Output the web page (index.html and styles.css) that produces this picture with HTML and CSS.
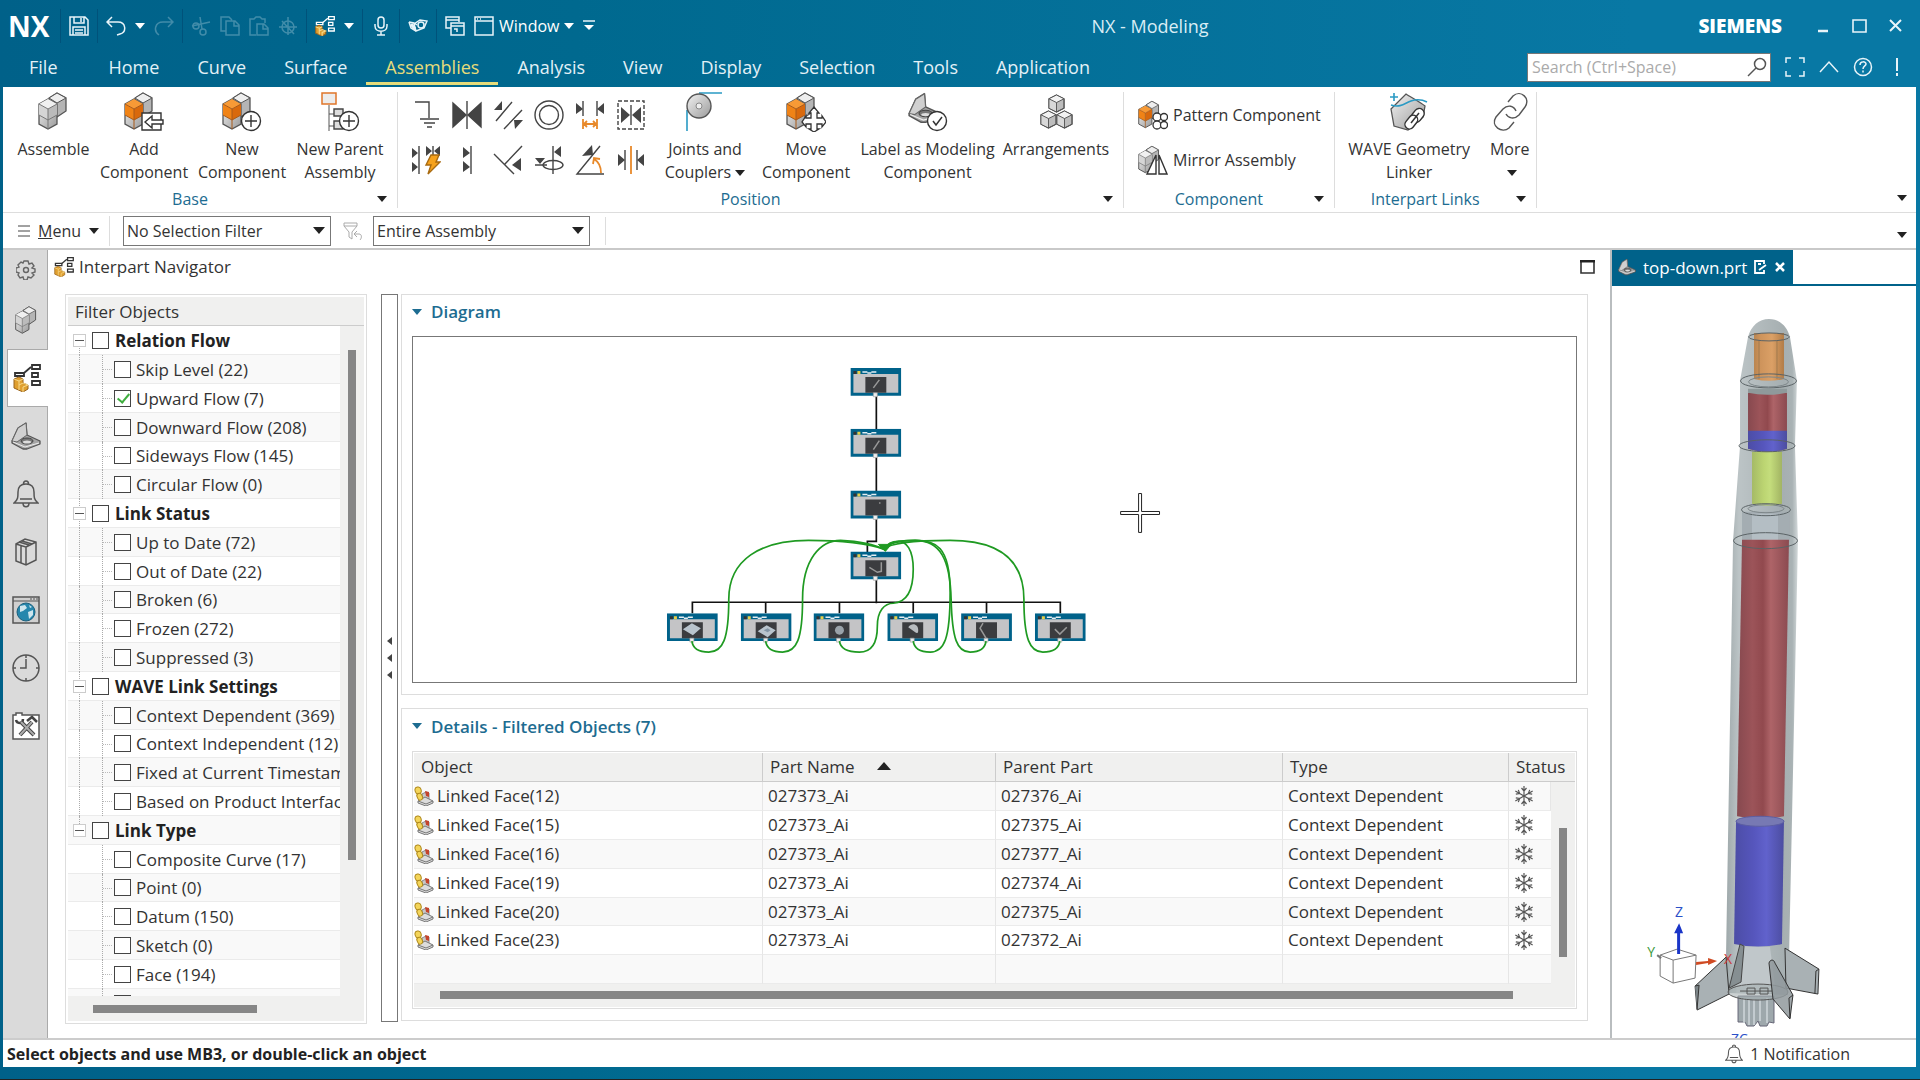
FILE: index.html
```html
<!DOCTYPE html>
<html lang="en">
<head>
    <meta charset="UTF-8">
    <meta name="viewport" content="width=device-width, initial-scale=1.0">
    <title>NX - Modeling</title>
    <link rel="stylesheet" href="styles.css">
</head>

<body>
    <!-- Shared icon shapes -->
    <svg class="sprite" aria-hidden="true">
        <linearGradient id="metal" x1="0" x2="1" y1="0" y2="1"><stop offset="0" stop-color="#f2f2f2"/><stop offset="1" stop-color="#9a9a9a"/></linearGradient>
        <symbol id="cubes" viewBox="0 0 30 38">
            <path d="M19 1l9 5v13l-9 6-8-6V6z" fill="#b5b5b5" stroke="#555" stroke-width="1.3"/>
            <path d="M19 1l9 5-9 5-8-5z" fill="#eee" stroke="#555"/>
            <path d="M1 12l9-5 9 5v20l-9 5-9-5z" fill="url(#metal)" stroke="#555" stroke-width="1.3"/>
            <path d="M10 17l9-5v11l-9 5z" style="fill:var(--right,#bbb)"/>
            <path d="M1 12l9 5v11l-9-5z" style="fill:var(--left,#d5d5d5)"/>
            <path d="M10 7l9 5-9 5-9-5z" style="fill:var(--top,#f0f0f0)"/>
            <path d="M1 23l9 5 9-5M10 17v20M1 12l9 5 9-5" fill="none" style="stroke:var(--edge,#777)"/>
        </symbol>
        <symbol id="cube" viewBox="0 0 18 20">
            <path d="M9 1l8 4v10l-8 4-8-4V5z" fill="#bdbdbd" stroke="#555" stroke-width="1.2"/>
            <path d="M9 1l8 4-8 4-8-4z" fill="#f2f2f2"/>
            <path d="M1 5l8 4v10l-8-4z" fill="#d8d8d8"/>
            <path d="M9 1l8 4v10l-8 4-8-4V5zM1 5l8 4 8-4M9 9v10" fill="none" stroke="#555"/>
        </symbol>
        <symbol id="bracket" viewBox="0 0 30 28">
            <path d="M1 19L7 6l8-5 1 12 13 6v3l-13 5h-4L1 21z" fill="#a5a5a5" stroke="#555" stroke-width="1.3" stroke-linejoin="round"/>
            <path d="M7 6l8-5 1 12-10 7-5-1z" fill="#d0d0d0" stroke="#666"/>
            <path d="M2 20l12 5 14-4" fill="none" stroke="#eee"/>
            <ellipse cx="16" cy="19" rx="6" ry="3" fill="#777" stroke="#444"/>
            <ellipse cx="16" cy="20" rx="4" ry="1.5" fill="#ddd"/>
        </symbol>
        <symbol id="navigator" viewBox="0 0 28 28">
            <path d="M2 9h9v3H2zM19 1h8v4h-8zM19 9h6v4h-6zM19 17h8v4h-8z" fill="none" stroke="currentColor" stroke-width="1.8"/>
            <path d="M11 9l7-6" stroke="currentColor" stroke-width="1.8"/>
            <path d="M1 15l5-2 4 2v4l5 2v4l-5 3-9-4z" fill="#e0a030" stroke="#9a641c"/>
            <path d="M1 15l5 2 4-2M6 17v9M6 21l4-2 5 2-5 2v5" fill="none" stroke="#f7d98a"/>
        </symbol>
        <symbol id="mate" viewBox="0 0 30 30">
            <path d="M1 3v24l13-12zM29 3v24L16 15z" fill="#444"/>
            <path d="M15 1v28" stroke="#444" stroke-width="1.4"/>
        </symbol>
        <symbol id="linked" viewBox="0 0 20 20">
            <path d="M8 8l4-2 3 1v7H8z" fill="#c9c9c9" stroke="#888"/>
            <path d="M11 5l4 1v5l-3-1z" fill="#c4442c"/>
            <path d="M4 15l7-4 8 4v2l-7 3-8-3z" fill="#dcdcdc" stroke="#777"/>
            <path d="M4 15l8 3 7-3" fill="none" stroke="#777"/>
            <rect x="1" y="1" width="6" height="7" rx="3" fill="#f4d55a" stroke="#b08a1c" transform="rotate(-15 4 4)"/>
            <rect x="3" y="7" width="5" height="7" rx="2.5" fill="#f4d55a" stroke="#b08a1c" transform="rotate(-25 6 10)"/>
        </symbol>
        <symbol id="snow" viewBox="0 0 20 20">
            <g fill="none" stroke="#555" stroke-width="1.2">
                <path id="arm" d="M10 10V0M7.500 2l2.500 3 2.500-3"/>
                <use href="#arm" transform="rotate(60 10 10)"/>
                <use href="#arm" transform="rotate(120 10 10)"/>
                <use href="#arm" transform="rotate(180 10 10)"/>
                <use href="#arm" transform="rotate(240 10 10)"/>
                <use href="#arm" transform="rotate(300 10 10)"/>
            </g>
        </symbol>
        <symbol id="bell" viewBox="0 0 26 28">
            <path d="M1 23c4-3 4-6 4-11 0-5 3-8 8-8s8 3 8 8c0 5 0 8 4 11zM10 23c0 5 6 5 6 0M10.500 4c0-4 5-4 5 0M7 19h12" fill="none" stroke="#555" stroke-width="1.5"/>
        </symbol>
        <symbol id="node" viewBox="0 0 51 30">
            <path fill="#00628a" d="M0 0h51v28H0z"/>
            <path fill="#c4c4c6" d="M3 6h45v19H3z"/>
            <path fill="#3b3c3f" d="M15 9h21v16H15z"/>
            <path fill="#333" d="M3 3h3v3H3z"/>
            <path fill="#e8d04a" d="M7 3h3v3H7z"/>
            <path d="M12 4h5m0 1h4m0-1h5" stroke="#e4eef3" stroke-width="1.5"/>
            <path fill="#eee" stroke="#999" stroke-width=".6" d="M23 25h4v4h-4z"/>
        </symbol>
    </svg>

    <div class="app">
        <!-- Title bar with quick access tools -->
        <header class="titlebar">
            <div class="quick">
                <strong class="brand">NX</strong>
                <div class="tools">
                    <button class="tool" aria-label="Save"><svg width="20" height="20" viewBox="0 0 20 20"><path d="M1 1h15l3 3v15H1zM5 1v6h10V1M12 2v4M4 19v-8h12v8M6 14h8M6 17h8"/></svg></button>
                </div>
                <div class="tools">
                    <button class="tool" aria-label="Undo"><svg width="20" height="20" viewBox="0 0 20 20"><path d="M6 1L1 6l5 5M1 6h11c8 0 9 10 2 12l-3 1"/></svg><span class="caret"></span></button>
                    <button class="tool" disabled aria-label="Redo"><svg width="20" height="20" viewBox="0 0 20 20"><path d="M14 1l5 5-5 5M19 6H9C1 6-1 15 5 19"/></svg></button>
                </div>
                <div class="tools">
                    <button class="tool" disabled aria-label="Cut"><svg width="20" height="20" viewBox="0 0 20 20"><path d="M9 1l2 12M1 10l18-4"/><circle cx="5" cy="10" r="3"/><circle cx="12" cy="16" r="3"/></svg></button>
                    <button class="tool" disabled aria-label="Copy"><svg width="20" height="20" viewBox="0 0 20 20"><path d="M6 15H1V1h8l3 3M6 5h9l4 4v10H6zM14 5v5h5"/></svg></button>
                    <button class="tool" disabled aria-label="Paste"><svg width="20" height="20" viewBox="0 0 20 20"><path d="M7 19H1V3h4l2-2h4l2 2h3v4M8 8h7l4 4v7H8zM14 8v5h5"/></svg></button>
                    <button class="tool" disabled aria-label="Delete"><svg width="20" height="20" viewBox="0 0 20 20"><circle cx="10" cy="11" r="6"/><path d="M10 1v18M1 11h18M4 5l12 13"/></svg></button>
                </div>
                <div class="tools">
                    <button class="tool" aria-label="Interpart Navigator"><svg width="20" height="20" class="plain"><use href="#navigator"/></svg><span class="caret"></span></button>
                </div>
                <div class="tools">
                    <button class="tool" aria-label="Dictate"><svg width="20" height="20" viewBox="0 0 20 20"><rect x="7" y="1" width="6" height="11" rx="3"/><path d="M4 8v2c0 7 12 7 12 0V8M10 15v4M6 19h8"/></svg></button>
                </div>
                <div class="tools">
                    <button class="tool" aria-label="Touch mode"><svg width="20" height="20" viewBox="0 0 20 20"><path d="M1 6l5 1 3 2M1 6l2 6 5 3M8 15l-2-7 6-4 7 1-3 7z"/><circle cx="13" cy="9" r="3"/><path d="M3 8l4 5" stroke-width="3"/></svg></button>
                </div>
                <div class="tools">
                    <button class="tool" aria-label="Switch window"><svg width="20" height="20" viewBox="0 0 20 20"><path d="M6 12H1V1h13v5M1 4h13M6 7h13v12H6zM6 10h13M9 13h3v3"/></svg></button>
                    <button class="tool window"><svg width="20" height="20" viewBox="0 0 20 20"><path d="M1 1h18v18H1zM1 5h18M3 3h1M6 3h1"/></svg>Window<span class="caret"></span></button>
                    <button class="tool" aria-label="Customize"><svg width="12" height="12" viewBox="0 0 12 12"><path d="M0 1h12"/><path d="M1 5h10l-5 5z" fill="#fff" stroke="none"/></svg></button>
                </div>
            </div>
            <h1 class="title">NX - Modeling</h1>
            <div class="system">
                <strong class="vendor">SIEMENS</strong>
                <button class="tool" aria-label="Minimize"><svg width="16" height="16" viewBox="0 0 16 16"><path d="M2 13h10" stroke-width="2.500"/></svg></button>
                <button class="tool" aria-label="Restore"><svg width="16" height="16" viewBox="0 0 16 16"><path d="M1 2h13v12H1z" stroke-width="1.600"/></svg></button>
                <button class="tool" aria-label="Close"><svg width="16" height="16" viewBox="0 0 16 16"><path class="bold" d="M2 2l11 11M13 2L2 13"/></svg></button>
            </div>
        </header>

        <nav class="tabs">
            <a href="#" class="file">File</a>
            <a href="#">Home</a>
            <a href="#">Curve</a>
            <a href="#">Surface</a>
            <a href="#" class="active">Assemblies</a>
            <a href="#">Analysis</a>
            <a href="#">View</a>
            <a href="#">Display</a>
            <a href="#">Selection</a>
            <a href="#">Tools</a>
            <a href="#">Application</a>
            <div class="search">
                <input type="text" placeholder="Search (Ctrl+Space)" aria-label="Search">
                <svg class="lens" width="20" height="20" viewBox="0 0 20 20"><circle cx="13" cy="7" r="5.500"/><path d="M9 11l-8 8"/></svg>
            </div>
            <div class="corner">
                <button class="tool" aria-label="Full screen"><svg width="20" height="20" viewBox="0 0 20 20"><path d="M6 1H1v5M14 1h5v5M6 19H1v-5M14 19h5v-5"/></svg></button>
                <button class="tool" aria-label="Collapse ribbon"><svg width="20" height="20" viewBox="0 0 20 20"><path d="M1 15l9-10 9 10"/></svg></button>
                <button class="tool" aria-label="Help"><svg width="20" height="20" viewBox="0 0 20 20"><circle cx="10" cy="10" r="8.500"/><path d="M7 8c0-4 6-4 6-1 0 2-3 2-3 5M10 13.500v2"/></svg></button>
                <button class="tool" aria-label="Alerts"><svg width="20" height="20" viewBox="0 0 20 20"><path class="bold" d="M10 1v13M10 16v3"/></svg></button>
            </div>
        </nav>

        <!-- Ribbon -->
        <div class="ribbon">
            <section class="group">
                <div class="commands base">
                    <button class="cmd w82"><svg width="40" height="40" viewBox="0 0 40 40"><use href="#cubes" x="4" width="30" height="38"/></svg>Assemble</button>
                    <button class="cmd w98 orange"><svg width="40" height="40" viewBox="0 0 40 40"><use href="#cubes" width="30" height="38"/><path d="M18 21h19v17H18z" fill="#fff" stroke="#333" stroke-width="1.4"/><path d="M21 30l7-6v4h11v4H28v4z" fill="#fff" stroke="#333" stroke-width="1.4"/></svg>Add<br>Component</button>
                    <button class="cmd w98 orange"><svg width="40" height="40" viewBox="0 0 40 40"><use href="#cubes" width="30" height="38"/><circle cx="29" cy="29" r="9.500" fill="#fff" stroke="#333" stroke-width="1.4"/><path d="M29 23v12M23 29h12" stroke="#333" stroke-width="1.4"/></svg>New<br>Component</button>
                    <button class="cmd w98"><svg width="40" height="40" viewBox="0 0 40 40"><path d="M9 13v26M9 22h5M9 34h5" stroke="#555" fill="none"/><path d="M2 1h14v11H2z" fill="#ececec" stroke="#e0762a" stroke-width="1.5"/><path d="M14 17h9v7h-9zM14 29h9v8h-9z" fill="#ddd" stroke="#444" stroke-width="1.4"/><circle cx="29" cy="29" r="9.500" fill="#fff" stroke="#333" stroke-width="1.4"/><path d="M29 23v12M23 29h12" stroke="#333" stroke-width="1.4"/></svg>New Parent<br>Assembly</button>
                </div>
                <footer><span>Base</span><span class="caret"></span></footer>
            </section>

            <section class="group">
                <div class="commands position">
                    <div class="constraints">
                        <button aria-label="Fix"><svg viewBox="0 0 30 30"><path d="M4 2h14v16M9 19h19M13 23h11M16 27h5"/></svg></button>
                        <button aria-label="Touch"><svg><use href="#mate"/></svg></button>
                        <button aria-label="Parallel"><svg viewBox="0 0 30 30"><path d="M3 21L19 2M11 29l18-19"/><path class="solid" d="M1 10l8-9v9zM21 20h9l-8 9z"/></svg></button>
                        <button aria-label="Concentric"><svg viewBox="0 0 30 30"><circle cx="15" cy="15" r="14"/><circle cx="15" cy="15" r="9.500"/></svg></button>
                        <button aria-label="Distance"><svg viewBox="0 0 30 30"><path d="M8 1v15M22 1v15"/><path class="solid" d="M1 3v11l7-5zM29 3v11l-7-5z"/><path d="M8 19v10M22 19v10M9 24h12M12 21l-3 3 3 3M18 21l3 3-3 3" class="hot"/></svg></button>
                        <button aria-label="Bond"><svg viewBox="0 0 30 30"><path d="M2 1h26v28H2z" stroke-dasharray="4 2"/><path class="solid" d="M5 7v16l9-8zM25 7v16l-9-8z"/><path d="M15 5v20"/></svg></button>
                        <button aria-label="Constraints"><svg viewBox="0 0 30 30"><path d="M8 1v28M22 1v10"/><path class="solid" d="M1 3v10l6-5zM1 17v10l6-5zM15 1v10l6-5zM29 1v10l-6-5z"/><path d="M20 10h8l-3 7h4L17 29l3-9h-5z" fill="#f6a21c" stroke="#a86a10"/></svg></button>
                        <button aria-label="Align"><svg viewBox="0 0 30 30"><path d="M19 1v28"/><path class="solid" d="M11 2v11l7-5zM11 16v11l7-5z"/></svg></button>
                        <button aria-label="Perpendicular"><svg viewBox="0 0 30 30"><path d="M29 1L11 20M1 9l20 20"/><path class="solid" d="M19 20l9-7v13z"/></svg></button>
                        <button aria-label="Axis"><svg viewBox="0 0 30 30"><path d="M19 1v28M1 20h12"/><ellipse cx="19" cy="20" rx="10" ry="4.500"/><path class="solid" d="M1 13h10l-5 6zM27 1v11l-7-5z"/></svg></button>
                        <button aria-label="Angle"><svg viewBox="0 0 30 30"><path d="M25 1L2 29h27"/><path class="solid" d="M7 11L17 0l1 10z"/><path class="hot" d="M19 14c5 3 7 8 7 14M18 19l1-6 6 1"/></svg></button>
                        <button aria-label="Center"><svg viewBox="0 0 30 30"><path class="hot" d="M15 1v28"/><path d="M9 5v20M21 5v20"/><path class="solid" d="M2 9v12l7-6zM28 9v12l-7-6z"/></svg></button>
                    </div>
                    <button class="cmd w108"><svg width="40" height="40" viewBox="0 0 40 40"><path d="M14 1h23M2 18v21" stroke="#2a9ac4" stroke-width="1.6"/><circle cx="14" cy="14" r="12" fill="url(#metal)" stroke="#555" stroke-width="1.4"/><circle cx="14" cy="14" r="3" fill="#eee" stroke="#888"/></svg>Joints and<br>Couplers<span class="caret"></span></button>
                    <button class="cmd w94 orange"><svg width="40" height="40" viewBox="0 0 40 40"><use href="#cubes" width="30" height="38"/><path d="M28 15l5 6h-2v5h5v-2l4 6-4 5v-3h-5v5h2l-5 3-5-3h2v-5h-5v3l-4-5 4-6v2h5v-5h-2z" fill="#fff" stroke="#333" stroke-width="1.3"/></svg>Move<br>Component</button>
                    <button class="cmd w148"><svg width="40" height="40" viewBox="0 0 40 40"><use href="#bracket" width="33" height="32"/><circle cx="29" cy="29" r="9.500" fill="#fff" stroke="#333" stroke-width="1.4"/><path d="M25 29l3 4 6-8" fill="none" stroke="#333" stroke-width="1.5"/></svg>Label as Modeling<br>Component</button>
                    <button class="cmd w108"><svg width="40" height="40" viewBox="0 0 40 40"><use href="#cube" x="12" y="2" width="17" height="19"/><use href="#cube" x="4" y="18" width="17" height="19"/><use href="#cube" x="20" y="18" width="17" height="19"/></svg>Arrangements</button>
                </div>
                <footer><span>Position</span><span class="caret"></span></footer>
            </section>

            <section class="group">
                <div class="commands stack">
                    <button class="wide orange"><svg width="30" height="30" viewBox="0 0 30 30"><use href="#cubes" width="22" height="29"/><g fill="#fff" stroke="#333" stroke-width="1.3"><circle cx="19" cy="17" r="4"/><circle cx="26" cy="17" r="3.500"/><circle cx="19" cy="25" r="4"/><circle cx="26" cy="25" r="3.500"/></g></svg>Pattern Component</button>
                    <button class="wide"><svg width="30" height="30" viewBox="0 0 30 30"><use href="#cubes" width="22" height="29"/><path d="M18 10v19H9zM21 10v19h8z" fill="#fff" stroke="#333" stroke-width="1.4"/></svg>Mirror Assembly</button>
                </div>
                <footer><span>Component</span><span class="caret"></span></footer>
            </section>

            <section class="group">
                <div class="commands">
                    <button class="cmd w148"><svg width="40" height="40" viewBox="0 0 40 40"><path d="M2 17L17 2c6 4 14 8 19 12L34 25 19 38 5 34z" fill="url(#metal)" stroke="#555" stroke-width="1.3"/><path d="M5 1v8M1 5h8M2 13c10 3 14-2 20-4s12-1 16 1" fill="none" stroke="#2a9ac4" stroke-width="1.6"/><g fill="#fff" stroke="#333" stroke-width="1.4"><rect x="24" y="16" width="10" height="15" rx="5" transform="rotate(38 29 23)"/><rect x="18" y="23" width="9" height="15" rx="4.500" transform="rotate(38 23 30)"/></g><path d="M22 31l8-10" stroke="#333" stroke-width="1.5"/></svg>WAVE Geometry<br>Linker</button>
                    <button class="cmd w46"><svg width="40" height="40" viewBox="0 0 40 40"><g fill="none" stroke="#555" stroke-width="1.4"><path d="M18 10l5-6c8-7 18 3 12 11l-6 8c-5 5-11 3-13-1"/><path d="M24 30l-5 6C12 42 0 34 6 25l7-8c5-5 11-3 13 2"/></g></svg>More<br><span class="caret"></span></button>
                </div>
                <footer><span>Interpart Links</span><span class="caret"></span></footer>
            </section>
            <span class="caret options"></span>
        </div>

        <!-- Selection bar -->
        <div class="selectbar">
            <button class="menu"><svg width="12" height="12" viewBox="0 0 12 12"><path d="M0 1h12M0 6h12M0 11h12" stroke="#444"/></svg><span><u>M</u>enu</span><span class="caret"></span></button>
            <div class="combo first"><select aria-label="Selection filter"><option>No Selection Filter</option></select><span class="caret"></span></div>
            <svg width="20" height="20" viewBox="0 0 20 20" fill="none" stroke="#aaa"><path d="M1 2h13v3L9 11v7l-3-2v-5L1 5zM1 5h13M14 10l-3 3 3 3M11 13h5c3 0 3 4 1 6"/></svg>
            <div class="combo second"><select aria-label="Selection scope"><option>Entire Assembly</option></select><span class="caret"></span></div>
            <span class="divider"></span>
            <span class="caret options"></span>
        </div>

        <main class="work">
            <!-- Resource bar -->
            <aside class="rail">
                <button class="gear" aria-label="Settings"><svg width="20" height="20" viewBox="0 0 20 20" fill="none" stroke="#666" stroke-width="1.4"><circle cx="10" cy="10" r="2.500"/><path d="M8 1h4l1 3 3-1 2 3-2 2 3 1v3l-3 1 2 2-3 3-3-1-1 3H8l-1-3-3 1-2-3 1-2-3-1V8l3-1-1-2 3-3 2 1z"/></svg></button>
                <button aria-label="Assembly Navigator"><svg width="26" height="28"><use href="#cubes"/></svg></button>
                <button class="active" aria-label="Interpart Navigator"><svg width="28" height="28"><use href="#navigator"/></svg></button>
                <button aria-label="Part Navigator"><svg width="30" height="28"><use href="#bracket"/></svg></button>
                <button aria-label="Notifications"><svg width="26" height="28"><use href="#bell"/></svg></button>
                <button aria-label="Reuse Library"><svg width="24" height="28" viewBox="0 0 24 28" fill="none" stroke="#555" stroke-width="1.5"><path d="M2 6l9-5 11 3v18l-10 5-10-4zM2 6l10 3v18M12 9l10-5M5 4l10 3M8 3l10 3M7 8v17"/></svg></button>
                <button aria-label="Web Browser"><svg width="28" height="28" viewBox="0 0 28 28"><path d="M1 1h26v26H1z" fill="#d0d0d0" stroke="#555" stroke-width="1.500"/><path d="M1 5h26M18 3h2M21 3h2M24 3h2" stroke="#555"/><circle cx="14" cy="16" r="9" fill="#2687ad" stroke="#1b5f7c"/><path d="M8 10l5-1 2 3-4 3-3 1zM16 16l5-2v5l-4 4zM17 9l3 2-2 1z" fill="#cfe6ee"/></svg></button>
                <button aria-label="History"><svg width="28" height="28" viewBox="0 0 28 28" fill="none" stroke="#555" stroke-width="1.5"><circle cx="14" cy="14" r="13"/><path d="M14 1v3M14 24v3M1 14h3M24 14h3M14 5v9H8"/></svg></button>
                <button aria-label="Roles"><svg width="28" height="28" viewBox="0 0 28 28"><path d="M1 27V3h3V1h6v2h17v24z" fill="#fff" stroke="#555" stroke-width="1.5"/><g fill="none" stroke="#444" stroke-width="4"><path d="M9 10l13 13M20 10L8 23"/><path d="M4 8c1 4 7 4 7-1M15 9l5-4 5 5" stroke-width="2.500"/></g><path d="M9 10l13 13M20 10L8 23" stroke="#aaa" stroke-width="2"/></svg></button>
            </aside>

            <section class="navigator">
                <header class="panel-title">
                    <svg width="20" height="20"><use href="#navigator"/></svg>
                    <h2>Interpart Navigator</h2>
                    <button aria-label="Maximize"><svg width="15" height="14" viewBox="0 0 15 14"><path d="M1 1h13v12H1z" fill="#fff" stroke="#333" stroke-width="1.600"/><path d="M0 1h15" stroke="#222" stroke-width="3"/></svg></button>
                </header>

                <div class="columns">
                    <!-- Filter tree -->
                    <div class="filter">
                        <h3>Filter Objects</h3>
                        <div class="tree-area">
                            <div class="tree">
                                <label class="head"><i></i><input type="checkbox">Relation Flow</label>
                                <label><input type="checkbox">Skip Level (22)</label>
                                <label><input type="checkbox" checked>Upward Flow (7)</label>
                                <label><input type="checkbox">Downward Flow (208)</label>
                                <label><input type="checkbox">Sideways Flow (145)</label>
                                <label class="end"><input type="checkbox">Circular Flow (0)</label>
                                <label class="head"><i></i><input type="checkbox">Link Status</label>
                                <label><input type="checkbox">Up to Date (72)</label>
                                <label><input type="checkbox">Out of Date (22)</label>
                                <label><input type="checkbox">Broken (6)</label>
                                <label><input type="checkbox">Frozen (272)</label>
                                <label class="end"><input type="checkbox">Suppressed (3)</label>
                                <label class="head"><i></i><input type="checkbox">WAVE Link Settings</label>
                                <label><input type="checkbox">Context Dependent (369)</label>
                                <label><input type="checkbox">Context Independent (12)</label>
                                <label><input type="checkbox">Fixed at Current Timestamp</label>
                                <label class="end"><input type="checkbox">Based on Product Interface</label>
                                <label class="head last"><i></i><input type="checkbox">Link Type</label>
                                <label class="tail"><input type="checkbox">Composite Curve (17)</label>
                                <label class="tail"><input type="checkbox">Point (0)</label>
                                <label class="tail"><input type="checkbox">Datum (150)</label>
                                <label class="tail"><input type="checkbox">Sketch (0)</label>
                                <label class="tail"><input type="checkbox">Face (194)</label>
                                <label class="tail"><input type="checkbox"></label>
                            </div>
                            <div class="vscroll"><span></span></div>
                        </div>
                        <div class="hscroll"><span></span></div>
                    </div>

                    <div class="splitter">
                        <span></span><span></span><span></span>
                    </div>

                    <div class="panes">
                        <section class="pane diagram">
                            <h3><span class="caret"></span>Diagram</h3>
                            <div class="canvas">
                                <svg viewBox="413 337 1163 346" preserveAspectRatio="xMidYMid meet">
                                    <path d="M876 396v34M876 457v35M876 519v23h-9v11M876 580v24M691.500 614v-11h369v11M765 603v11M839 603v11M913 603v11M986.500 603v11" fill="none" stroke="#111" stroke-width="1.700"/>
                                    <use href="#node" x="850" y="368" width="51" height="30"/>
                                    <use href="#node" x="850" y="429" width="51" height="30"/>
                                    <use href="#node" x="850" y="491" width="51" height="30"/>
                                    <use href="#node" x="850" y="552" width="51" height="30"/>
                                    <use href="#node" x="666" y="614" width="51" height="30"/>
                                    <use href="#node" x="740" y="614" width="51" height="30"/>
                                    <use href="#node" x="813" y="614" width="51" height="30"/>
                                    <use href="#node" x="887" y="614" width="51" height="30"/>
                                    <use href="#node" x="961" y="614" width="51" height="30"/>
                                    <use href="#node" x="1035" y="614" width="51" height="30"/>
                                    <!-- part thumbnails -->
                                    <g fill="none" stroke="#999" stroke-width="1.500">
                                        <path d="M873 388l6-8M873 450l6-9M879 504l1-1M869 568l8 5 4-1v-9M983 624l-3 5 6 10M1055 630l5 5 7-7"/>
                                    </g>
                                    <path d="M682 630l9-6 9 5-8 7zM757 632l9-6 9 5-8 7z" fill="#b9c4cd"/>
                                    <path d="M763 631l4-2 3 2-3 2z" fill="#8396a6"/>
                                    <circle cx="839" cy="631" r="4.500" fill="#9aa3aa"/>
                                    <path d="M908 628c4-5 10-3 10 3 0 4-2 3-3 2z" fill="#b8bcc0"/>
                                    <g fill="none" stroke="#1f9a22" stroke-width="1.700">
                                        <path d="M691 642c1 8 8 11 17 11 14 0 20-13 20-53s32-59 80-59c42 0 62 4 76 9"/>
                                        <path d="M765 642c1 8 8 11 17 11 14 0 20-13 20-53s18-59 38-59c20 1 34 4 44 9"/>
                                        <path d="M839 642c1 8 10 11 20 11 13 0 18-11 18-26s7-23 16-23c15-1 20-14 20-34s-7-28-15-28-12 4-14 8"/>
                                        <path d="M913 642c1 8 8 11 17 11 14 0 20-13 20-60s-15-52-35-52-28 4-31 9"/>
                                        <path d="M986 642c-1 8-8 11-16 11-13 0-18-13-19-53s-11-59-36-59-28 4-31 9"/>
                                        <path d="M1060 642c-1 8-8 11-17 11-13 0-19-13-19-53s-26-59-74-59c-44 0-62 4-66 9"/>
                                    </g>
                                    <path d="M878 545h13l-6 7z" fill="#1f9a22" stroke="#1f9a22"/>
                                    <path d="M1139 494h3v18h18v3h-18v18h-3v-18h-18v-3h18z" fill="#fff" stroke="#222"/>
                                </svg>
                            </div>
                        </section>

                        <section class="pane details">
                            <h3><span class="caret"></span>Details - Filtered Objects (7)</h3>
                            <div class="grid">
                                <table>
                                    <colgroup><col><col class="part"><col class="parent"><col class="type"><col class="status"><col class="bar"></colgroup>
                                    <thead>
                                        <tr><th>Object</th><th>Part Name<span class="sort"></span></th><th>Parent Part</th><th>Type</th><th colspan="2">Status</th></tr>
                                    </thead>
                                    <tbody>
                                        <tr><td><svg><use href="#linked"/></svg>Linked Face(12)</td><td>027373_Ai</td><td>027376_Ai</td><td>Context Dependent</td><td><svg><use href="#snow"/></svg></td><td class="vscroll" rowspan="7"><span></span></td></tr>
                                        <tr><td><svg><use href="#linked"/></svg>Linked Face(15)</td><td>027373_Ai</td><td>027375_Ai</td><td>Context Dependent</td><td><svg><use href="#snow"/></svg></td></tr>
                                        <tr><td><svg><use href="#linked"/></svg>Linked Face(16)</td><td>027373_Ai</td><td>027377_Ai</td><td>Context Dependent</td><td><svg><use href="#snow"/></svg></td></tr>
                                        <tr><td><svg><use href="#linked"/></svg>Linked Face(19)</td><td>027373_Ai</td><td>027374_Ai</td><td>Context Dependent</td><td><svg><use href="#snow"/></svg></td></tr>
                                        <tr><td><svg><use href="#linked"/></svg>Linked Face(20)</td><td>027373_Ai</td><td>027375_Ai</td><td>Context Dependent</td><td><svg><use href="#snow"/></svg></td></tr>
                                        <tr><td><svg><use href="#linked"/></svg>Linked Face(23)</td><td>027373_Ai</td><td>027372_Ai</td><td>Context Dependent</td><td><svg><use href="#snow"/></svg></td></tr>
                                        <tr><td></td><td></td><td></td><td></td><td></td></tr>
                                    </tbody>
                                </table>
                                <div class="hscroll"><span></span></div>
                            </div>
                        </section>
                    </div>
                </div>
            </section>

            <!-- Graphics window -->
            <section class="viewport">
                <header>
                    <a href="#" class="doc"><svg width="18" height="18"><use href="#bracket"/></svg>top-down.prt<svg width="13" height="14" viewBox="0 0 13 14" fill="none" stroke="#fff" stroke-width="1.800"><path d="M10 4V1H1v12h9v-3M5 10l7-5M4 4h3"/></svg><svg width="12" height="12" viewBox="0 0 12 12" stroke="#fff" stroke-width="2.500"><path d="M2 2l8 8M10 2l-8 8"/></svg></a>
                </header>
                <svg class="model" viewBox="1612 286 304 753" preserveAspectRatio="xMidYMid meet">
                    <defs>
                        <linearGradient id="shell"><stop offset="0" stop-color="#9ea8aa"/><stop offset=".18" stop-color="#bcc4c6"/><stop offset=".8" stop-color="#a6afb1"/><stop offset=".92" stop-color="#a9b2b4"/><stop offset="1" stop-color="#d3d9da"/></linearGradient>
                        <linearGradient id="red"><stop offset="0" stop-color="#87494f"/><stop offset=".3" stop-color="#9c5459"/><stop offset=".5" stop-color="#91494e"/><stop offset=".65" stop-color="#ae6468"/><stop offset="1" stop-color="#8b4a50"/></linearGradient>
                        <linearGradient id="blue"><stop offset="0" stop-color="#4c4da6"/><stop offset=".4" stop-color="#5656bd"/><stop offset=".65" stop-color="#6162cc"/><stop offset="1" stop-color="#4c4da0"/></linearGradient>
                        <linearGradient id="green"><stop offset="0" stop-color="#a5ba66"/><stop offset=".4" stop-color="#bcd572"/><stop offset=".6" stop-color="#c4dd7c"/><stop offset="1" stop-color="#a2b463"/></linearGradient>
                        <linearGradient id="tan"><stop offset="0" stop-color="#b98550"/><stop offset=".2" stop-color="#cd935b"/><stop offset=".6" stop-color="#dba066"/><stop offset="1" stop-color="#b27c47"/></linearGradient>
                    </defs>
                    <path d="M1748 337c3-11 11-18 21-18s18 7 21 18l7 44-2 65 3 95-9 420-1 35-60-2-2-38 7-415 7-95v-65z" fill="url(#shell)"/>
                    <path d="M1748 393h39v56q-20 6-39 0z" fill="url(#red)"/>
                    <path d="M1748 431h39v18q-20 6-39 0z" fill="url(#blue)"/>
                    <path d="M1754 333h30v46q-15 4-30 0z" fill="url(#tan)"/>
                    <path d="M1759 341v38M1777 341v38" stroke="#a0794e"/>
                    <path d="M1748 389h39v4q-20 4-39 0z" fill="#8f9a9b"/>
                    <path d="M1752 452h30v52q-15 4-30 0z" fill="url(#green)"/>
                    <path d="M1742 512h48v30h-48z" fill="#a4adb2"/><path d="M1752 514h26v28h-26z" fill="#b4bec4"/>
                    <path d="M1742 540h47l-5 277q-24 5-47 0z" fill="url(#red)"/>
                    <path d="M1736 821h48l-2 124q-24 5-48 0z" fill="url(#blue)"/>
                    <ellipse cx="1760" cy="822" rx="24" ry="5" fill="#7779b3" stroke="#5c5ea2"/>
                    <g fill="none" stroke="#5a6265">
                        <ellipse cx="1769" cy="337" rx="20.500" ry="4"/>
                        <ellipse cx="1768.500" cy="381" rx="28" ry="7"/>
                        <ellipse cx="1768.500" cy="382" rx="20" ry="5" stroke="#7d878a"/>
                        <ellipse cx="1767" cy="446" rx="28" ry="6"/>
                        <ellipse cx="1766" cy="510" rx="24.500" ry="6"/>
                        <ellipse cx="1766" cy="509" rx="18" ry="4" stroke="#7d878a"/>
                        <ellipse cx="1765.500" cy="541" rx="32" ry="8"/>
                    </g>
                    <!-- fins and nozzles -->
                    <path d="M1738 997h36v27l-5-1-2 4h-7l-2-5-4 5h-7l-2-4h-7z" fill="#9ea8ac" stroke="#667"/>
                    <path d="M1744 999v25M1754 1000v26M1760 1000v22M1767 999v25M1749 1000v26" stroke="#c3cbcf" stroke-width="2"/>
                    <path d="M1743 948h27l6 46h-40z" fill="#c0c7ca"/>
                    <path d="M1740 945l4 2-3 36-12 6z" fill="#868f92" stroke="#444"/>
                    <path d="M1726 958l3 37-32 16-2-24z" fill="#a9b1b4" stroke="#333"/>
                    <path d="M1695 987l4-1-2 24" fill="#7c8588" stroke="#333"/>
                    <path d="M1785 949l34 21-1 25-32-6z" fill="#a9b1b4" stroke="#333"/>
                    <path d="M1819 970l-3 2-1 22" fill="none" stroke="#333"/>
                    <ellipse cx="1758" cy="993" rx="30" ry="8" fill="#a7b0b3" fill-opacity=".6" stroke="#555"/>
                    <path d="M1740 992h32M1747 989h8v6h-8zM1760 989h8v6h-8z" fill="none" stroke="#555"/>
                    <path d="M1769 964c1-4 5-4 6 0l18 32-3 24-17-20z" fill="#90999c" fill-opacity=".85" stroke="#333"/>
                    <path d="M1793 996l-4 3 1 20" fill="none" stroke="#333"/>
                    <!-- view triad -->
                    <path d="M1660 956l17-6 19 6-1 23-22 5-13-7z" fill="#fff" stroke="#777"/>
                    <path d="M1660 956l13 5 23-5M1673 961v23" fill="none" stroke="#777"/>
                    <path d="M1677 955v-21h-3l5-10 4 10h-3v21z" fill="#1a35c8"/>
                    <path d="M1696 963l12-1v-3l9 3-9 4v-2l-12 2z" fill="#cf4a22"/>
                    <path d="M1661 959l-4-3" stroke="#777" stroke-width="2"/>
                    <text x="1675" y="918" fill="#2b50c8">Z</text>
                    <text x="1647" y="958" fill="#3a9a3a">Y</text>
                    <text x="1724" y="965" fill="#cc3a3a">X</text>
                    <text x="1731" y="1045" fill="#2b50c8">ZC</text>
                </svg>
            </section>
        </main>

        <footer class="statusbar">
            <strong>Select objects and use MB3, or double-click an object</strong>
            <button><svg width="18" height="20"><use href="#bell"/></svg>1 Notification</button>
        </footer>
    </div>
</body>
</html>
```
FILE: styles.css
```css
* {
    box-sizing: border-box;
}
body {
    margin: 0;
    font-family: "Open Sans", "Noto Sans", sans-serif;
    font-size: 16px;
    color: #333;
}
h1, h2, h3 {
    margin: 0;
    font-weight: normal;
}
button {
    padding: 0;
    border: none;
    background: none;
    font: inherit;
    color: inherit;
    cursor: pointer;
}
a {
    color: inherit;
    text-decoration: none;
}
.sprite {
    position: absolute;
    width: 0;
    height: 0;
}
.app {
    display: flex;
    flex-direction: column;
    height: 100vh;
    padding: 0 4px 12px 3px;
    background: linear-gradient(to right, #006189, #00698f 30%, #0878a4 85%);
    border-bottom: 1px solid #222;
}
.caret {
    display: inline-block;
    flex: none;
    border: 5px solid transparent;
    border-top: 6px solid #222;
    border-bottom: none;
}

/* Title bar */
.titlebar {
    display: grid;
    grid-template-columns: 20fr auto 13fr;
    align-items: center;
    height: 49px;
    padding-top: 3px;
    color: #fff;
}
.quick {
    display: flex;
    align-items: center;
}
.brand {
    width: 57px;
    padding-left: 5px;
    font-size: 28px;
    line-height: 34px;
}
.tools {
    display: flex;
    align-items: center;
    gap: 9px;
    height: 34px;
    padding: 0 8px;
    border-left: 1px solid #00527a;
}
.tool {
    display: flex;
    align-items: center;
    gap: 9px;
}
.tool svg {
    fill: none;
    stroke: #e8f4f9;
    stroke-width: 1.5;
}
.tool .bold {
    stroke-width: 2;
}
.tool svg.plain {
    stroke: none;
}
.tool:disabled {
    opacity: 0.28;
}
.tool .caret {
    border-top-color: #fff;
}
.window {
    gap: 5px;
}
.title {
    font-size: 18px;
    color: #d9edf5;
}
.system {
    display: flex;
    justify-content: flex-end;
    align-items: center;
    gap: 20px;
    padding-right: 12px;
}
.vendor {
    margin-right: 14px;
    font-size: 19px;
    font-weight: 800;
}

/* Ribbon tabs */
.tabs {
    display: flex;
    align-items: center;
    height: 38px;
    padding-bottom: 2px;
    font-size: 18px;
    color: #e3f1f7;
}
.tabs > a {
    height: 36px;
    padding: 0 19px;
    line-height: 36px;
    border-bottom: 3px solid transparent;
}
.tabs > .file {
    padding: 0 32px 0 26px;
}
.tabs > .active {
    color: #e6dc7a;
    border-bottom-color: #e6dc7a;
}
.search {
    position: relative;
    margin-left: auto;
    width: 244px;
}
.search input {
    display: block;
    width: 100%;
    height: 29px;
    padding: 0 30px 0 4px;
    border: 1px solid #777;
    font: inherit;
    font-size: 16px;
    background: #fff;
}
.search input::placeholder {
    color: #aaa;
}
.lens {
    position: absolute;
    right: 4px;
    top: 4px;
    fill: none;
    stroke: #555;
    stroke-width: 1.5;
}
.corner {
    display: flex;
    gap: 14px;
    padding: 0 9px 0 14px;
}

/* Ribbon */
.ribbon {
    display: flex;
    height: 126px;
    padding: 5px 0 4px;
    background: #fff;
    border-bottom: 1px solid #ddd;
}
.group {
    display: flex;
    flex-direction: column;
    border-right: 1px solid #ddd;
}
.group footer {
    display: flex;
    align-items: center;
    margin-top: auto;
    padding-right: 10px;
    line-height: 18px;
    color: #1d6c91;
}
.group footer span:first-child {
    flex: 1;
    text-align: center;
}
.commands {
    display: flex;
    align-items: flex-start;
}
.base {
    padding: 0 8px 0 9px;
}
.position {
    padding: 0 13px 0 7px;
}
.cmd {
    display: block;
    text-align: center;
    line-height: 23px;
    white-space: nowrap;
}
.cmd svg {
    display: block;
    margin: 0 auto 6px;
}
.cmd .caret {
    margin: 0 0 2px 4px;
}
.orange {
    --top: #f79a36;
    --left: #f08316;
    --right: #d9690c;
    --edge: #a85a1a;
}
.w46 { width: 52px; }
.w82 { width: 83px; }
.w94 { width: 94px; }
.w98 { width: 98px; }
.w108 { width: 108px; }
.w148 { width: 149px; }
.constraints {
    display: grid;
    grid-template-columns: repeat(6, 41px);
    grid-auto-rows: 45px;
}
.constraints svg {
    display: block;
    width: 30px;
    height: 30px;
    margin: 0 auto;
    fill: none;
    stroke: #444;
    stroke-width: 1.4;
}
.constraints .solid {
    fill: #444;
    stroke: none;
}
.constraints .hot {
    stroke: #e8892a;
    stroke-width: 1.8;
}
.stack {
    flex-direction: column;
    gap: 15px;
    padding: 8px 13px 8px 14px;
}
.wide {
    display: flex;
    align-items: center;
    gap: 5px;
    height: 30px;
}
.options {
    align-self: flex-end;
    margin: 0 9px 7px auto;
}

/* Selection bar */
.selectbar {
    display: flex;
    align-items: center;
    height: 37px;
    padding-left: 15px;
    background: #fff;
    border-bottom: 2px solid #c9c9c9;
}
.selectbar .options {
    margin-bottom: 10px;
}
.menu {
    display: flex;
    align-items: center;
    gap: 8px;
    height: 30px;
    padding-right: 10px;
    border-right: 1px solid #ddd;
}
.combo {
    position: relative;
    height: 30px;
}
.combo select {
    appearance: none;
    width: 100%;
    height: 100%;
    padding: 0 3px;
    border: 1px solid #777;
    border-radius: 0;
    background: #fff;
    font: inherit;
    color: inherit;
}
.combo .caret {
    position: absolute;
    right: 6px;
    top: 11px;
    pointer-events: none;
    border-width: 7px 6px 0;
}
.first {
    width: 208px;
    margin: 0 12px 0 13px;
}
.second {
    width: 217px;
    margin-left: 10px;
}
.divider {
    height: 28px;
    margin-left: 15px;
    border-left: 1px solid #ddd;
}

/* Work area */
.work {
    flex: 1;
    display: flex;
    min-height: 0;
    background: #fff;
}
.rail {
    display: flex;
    flex-direction: column;
    width: 45px;
    background: #dadada;
    border-right: 1px solid #aaa;
}
.rail button {
    display: flex;
    align-items: center;
    justify-content: center;
    height: 58px;
    padding-left: 2px;
}
.rail .gear {
    height: 41px;
    padding-bottom: 2px;
}
.rail .active {
    margin: 0 -1px 0 4px;
    padding: 0 2px 0 0;
    background: #fff;
    border: 1px solid #aaa;
    border-right: none;
}
.navigator {
    flex: 1;
    display: flex;
    flex-direction: column;
    min-width: 0;
    padding: 0 22px 14px 6px;
}
.panel-title {
    display: flex;
    align-items: center;
    gap: 5px;
    height: 44px;
    padding-bottom: 10px;
    font-size: 17px;
}
.panel-title h2 {
    font-size: 17px;
    line-height: 24px;
}
.panel-title button {
    margin: 0 -7px 0 auto;
}
.columns {
    flex: 1;
    display: flex;
    min-height: 0;
    padding-left: 11px;
}
.filter {
    display: flex;
    flex-direction: column;
    width: 302px;
    padding: 2px;
    border: 1px solid #ddd;
    font-size: 17px;
}
.filter h3 {
    height: 29px;
    padding-left: 7px;
    font-size: 17px;
    line-height: 30px;
    background: #f0f0ef;
    border-bottom: 1px solid #ccc;
}
.tree-area {
    flex: 1;
    display: flex;
    min-height: 0;
}
.tree {
    flex: 1;
    min-width: 0;
    overflow: hidden;
}
.tree label {
    position: relative;
    display: flex;
    align-items: center;
    gap: 5px;
    height: 29px;
    padding-left: 46px;
    border-bottom: 1px solid #ebebeb;
    white-space: nowrap;
}
.tree label:nth-child(5n) {
    height: 28px;
}
.tree label:nth-child(even) {
    background: #f9f9f9;
}
.tree .head {
    gap: 6px;
    padding-left: 5px;
    font-weight: bold;
    color: #222;
}
/* dotted branch lines */
.tree label::before {
    content: "";
    position: absolute;
    left: 11px;
    top: 0;
    bottom: -1px;
    border-left: 1px dotted #aaa;
}
.tree label:not(.head)::after {
    content: "";
    position: absolute;
    left: 34px;
    top: 0;
    bottom: -1px;
    border-left: 1px dotted #aaa;
    width: 10px;
    background: linear-gradient(to right, #bbb 1px, transparent 1px) 0 50% / 2px 1px repeat-x;
}
.tree .end::after {
    bottom: 50%;
    background-position: 0 100%;
}
.tree .head:first-child::before {
    top: 50%;
}
.tree .last::before {
    bottom: 50%;
}
.tree .tail::before {
    display: none;
}
.tree i {
    z-index: 1;
    width: 13px;
    height: 13px;
    border: 1px solid #ccc;
    background: linear-gradient(#555, #555) center / 9px 1px no-repeat #fff;
}
.tree input {
    appearance: none;
    flex: none;
    width: 17px;
    height: 17px;
    margin: 0;
    border: 1px solid #444;
    background: #fff;
}
.tree input:checked::before {
    content: "";
    display: block;
    width: 5px;
    height: 10px;
    margin: 0 0 0 5px;
    border: solid #3fae3f;
    border-width: 0 2px 2px 0;
    transform: rotate(40deg);
}
.vscroll {
    width: 24px;
    padding: 24px 0 0 8px;
    background: #f0f0ef;
}
.vscroll span, .hscroll span {
    display: block;
    background: #868686;
}
.vscroll span {
    width: 8px;
    height: 79%;
}
.hscroll {
    height: 25px;
    padding: 9px 0 0 25px;
    background: #f0f0ef;
}
.hscroll span {
    width: 164px;
    height: 8px;
}
.splitter {
    display: flex;
    flex-direction: column;
    justify-content: center;
    gap: 9px;
    width: 17px;
    margin: 0 3px 2px 14px;
    border: 1px solid #777;
}
.splitter span {
    align-self: center;
    border: 4px solid transparent;
    border-right: 5px solid #444;
    border-left: none;
}
.panes {
    flex: 1;
    display: flex;
    flex-direction: column;
    gap: 13px;
    min-width: 0;
    padding-bottom: 3px;
}
.pane {
    display: flex;
    flex-direction: column;
    padding: 0 10px 11px;
    border: 1px solid #ddd;
}
.pane h3 {
    display: flex;
    align-items: center;
    gap: 9px;
    height: 41px;
    padding-bottom: 8px;
    font-size: 17px;
    font-weight: 600;
    color: #1d6c91;
}
.pane h3 .caret {
    border-top-color: #1d6c91;
}
.diagram {
    flex: 1;
    min-height: 0;
}
.details h3 {
    height: 42px;
}
.canvas {
    flex: 1;
    min-height: 0;
    border: 1px solid #777;
}
.canvas svg {
    display: block;
    width: 100%;
    height: 100%;
}
.grid {
    padding: 1px;
    border: 1px solid #ddd;
    font-size: 17px;
}
.grid table {
    table-layout: fixed;
    width: 100%;
    border-collapse: separate;
    border-spacing: 0;
}
.grid th, .grid td {
    height: 29px;
    padding: 0;
    border-right: 1px solid #e6e6e6;
    border-bottom: 1px solid #ebebeb;
    font-weight: normal;
    text-align: left;
    line-height: 20px;
    white-space: nowrap;
}
.grid tbody tr:nth-child(5) td {
    height: 28px;
}
.grid th {
    padding-left: 7px;
    background: #f0f0ef;
    border-color: #ccc;
}
.grid th:last-child, .grid td:last-child {
    border-right: none;
}
.grid td + td {
    padding-left: 5px;
}
.grid tbody tr:nth-child(odd) {
    background: #f9f9f9;
}
.grid td svg {
    width: 20px;
    height: 20px;
    margin-right: 3px;
    vertical-align: top;
}
.part { width: 233px; }
.parent { width: 287px; }
.type { width: 226px; }
.status { width: 42px; }
.bar { width: 24px; }
.sort {
    display: inline-block;
    margin: 0 0 3px 22px;
    border: 7px solid transparent;
    border-bottom: 8px solid #222;
    border-top: none;
}
.grid td.vscroll {
    padding: 46px 0 24px 8px;
    vertical-align: top;
    border: none;
}
.grid .vscroll span {
    height: 129px;
}
.grid .hscroll {
    height: 23px;
    padding: 7px 62px 0 26px;
}
.grid .hscroll span {
    width: 100%;
}

/* Graphics window */
.viewport {
    display: flex;
    flex-direction: column;
    width: 306px;
    border-left: 2px solid #b9bdbf;
}
.viewport header {
    display: flex;
    height: 36px;
    border-bottom: 2px solid #00628a;
}
.doc {
    display: flex;
    align-items: center;
    gap: 7px;
    height: 34px;
    padding: 0 7px 0 6px;
    font-size: 17px;
    color: #fff;
    background: #00628a;
}
.model {
    flex: 1;
    width: 100%;
    min-height: 0;
}
.model text {
    font-size: 14px;
}

/* Status bar */
.statusbar {
    display: flex;
    align-items: center;
    justify-content: space-between;
    height: 29px;
    padding: 0 66px 0 4px;
    background: #fff;
    border-top: 2px solid #ccc;
}
.statusbar strong {
    color: #222;
}
.statusbar button {
    display: flex;
    align-items: center;
    gap: 7px;
}
```
